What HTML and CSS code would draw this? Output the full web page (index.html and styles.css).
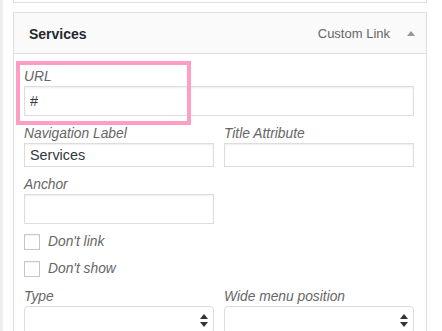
FILE: index.html
```html
<!DOCTYPE html>
<html>
<head>
    <title>Menu item settings</title>
    <meta http-equiv="Content-Type" content="text/html; charset=utf-8"/>
    <link rel="stylesheet" href="styles.css">
</head>
<body>
<div id="menuEditor">
    <div class="menuItem prevItem"></div>
    <div class="menuItem">
        <div class="itemBar">
            <span class="itemTitle">Services</span>
            <span class="itemControls">
                <span class="itemType">Custom Link</span>
                <span class="itemArrow"></span>
            </span>
        </div>
        <div class="itemSettings">
            <div class="highlight"></div>
            <label class="field wide">
                <span class="fieldLabel">URL</span>
                <input class="textInput tall" type="text" value="#">
            </label>
            <div class="fieldRow">
                <label class="field">
                    <span class="fieldLabel">Navigation Label</span>
                    <input class="textInput" type="text" value="Services">
                </label>
                <label class="field">
                    <span class="fieldLabel">Title Attribute</span>
                    <input class="textInput" type="text" value="">
                </label>
            </div>
            <div class="fieldRow anchorRow">
                <label class="field">
                    <span class="fieldLabel">Anchor</span>
                    <input class="textInput tall" type="text" value="">
                </label>
            </div>
            <label class="checkField"><span class="checkBox"></span><span class="fieldLabel">Don't link</span></label>
            <label class="checkField"><span class="checkBox"></span><span class="fieldLabel">Don't show</span></label>
            <div class="fieldRow">
                <div class="field">
                    <span class="fieldLabel">Type</span>
                    <div class="selectBox">
                        <svg width="8" height="13" viewBox="0 0 8 13"><path d="M4 0 L8 5 L0 5 Z M0 8 L8 8 L4 13 Z" fill="#333"/></svg>
                    </div>
                </div>
                <div class="field">
                    <span class="fieldLabel">Wide menu position</span>
                    <div class="selectBox">
                        <svg width="8" height="13" viewBox="0 0 8 13"><path d="M4 0 L8 5 L0 5 Z M0 8 L8 8 L4 13 Z" fill="#333"/></svg>
                    </div>
                </div>
            </div>
        </div>
    </div>
</div>
</body>
</html>
```

FILE: styles.css
```css
body {
    margin: 0;
    background-color: #fff;
    font-family: "Liberation Sans", Arial, sans-serif;
    color: #23282d;
}

#menuEditor {
    height: 331px;
    overflow: hidden;
    border-left: 3px solid #eeeeee;
    padding-left: 10px;
}

.menuItem {
    width: 412px;
    border: 1px solid #dfdfdf;
}

.prevItem {
    height: 2px;
    border-top: 0;
    margin-bottom: 9px;
}

.itemBar {
    display: flex;
    align-items: center;
    justify-content: space-between;
    height: 40px;
    padding: 0 11px 0 15px;
    background-color: #fafafa;
    border-bottom: 1px solid #dfdfdf;
}

.itemTitle {
    font-size: 14px;
    font-weight: bold;
    color: #23282d;
    padding-top: 2px;
}

.itemControls {
    display: flex;
    align-items: center;
    gap: 17px;
}

.itemType {
    font-size: 13px;
    color: #666;
}

.itemArrow {
    width: 0;
    height: 0;
    border-left: 4px solid transparent;
    border-right: 4px solid transparent;
    border-bottom: 5px solid #999;
}

.itemSettings {
    position: relative;
    padding: 14px 12px 10px 10px;
    height: 300px;
}

.highlight {
    position: absolute;
    top: 7px;
    left: 2px;
    width: 167px;
    height: 56px;
    border: 4px solid #ff9ec4;
    pointer-events: none;
}

.field {
    display: flex;
    flex-direction: column;
    width: 190px;
}

.field.wide {
    width: 390px;
    margin-bottom: 9px;
}

.fieldRow {
    display: flex;
    gap: 10px;
    margin-bottom: 9px;
}

.anchorRow {
    margin-bottom: 10px;
}

.fieldLabel {
    font-size: 13.8px;
    font-style: italic;
    line-height: 18px;
    color: #666;
}

.textInput {
    box-sizing: border-box;
    width: 100%;
    height: 24px;
    margin: 0;
    padding: 0 5px;
    border: 1px solid #ddd;
    box-shadow: inset 0 1px 2px rgba(0, 0, 0, 0.07);
    background-color: #fff;
    font-family: "Liberation Sans", Arial, sans-serif;
    font-size: 14.4px;
    color: #32373c;
    outline: none;
}

.textInput.tall {
    height: 30px;
}

.checkField {
    display: flex;
    align-items: center;
    gap: 8px;
    height: 16px;
    margin-bottom: 11px;
}

.checkBox {
    box-sizing: border-box;
    width: 16px;
    height: 16px;
    border: 1px solid #c8c8c8;
    background-color: #fff;
    box-shadow: inset 0 1px 2px rgba(0, 0, 0, 0.05);
}

.selectBox {
    box-sizing: border-box;
    display: flex;
    align-items: center;
    justify-content: flex-end;
    height: 28px;
    padding-right: 5px;
    border: 1px solid #dcdcdc;
    border-radius: 4px;
    background-color: #fff;
}
```
